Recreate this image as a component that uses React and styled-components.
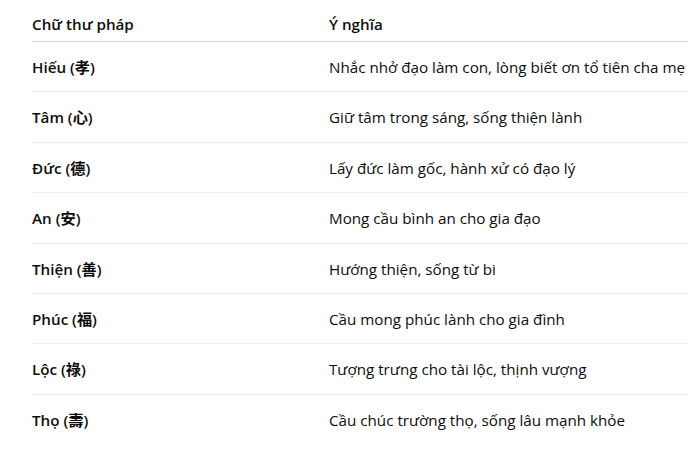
import React from "react";
import styled, { createGlobalStyle } from "styled-components";

const Global = createGlobalStyle`
  html, body { margin: 0; padding: 0; background: #ffffff; overflow: hidden; }
  body { font-family: "Open Sans", "Noto Sans", "Noto Sans CJK SC", sans-serif; color: #0d0d0d; }
`;

const Page = styled.div`
  width: 688px;
  height: 455px;
  overflow: hidden;
  padding: 6px 0 0 32px;
  box-sizing: border-box;
`;

const Table = styled.table`
  border-collapse: collapse;
  width: 720px;
  table-layout: fixed;
  font-size: 15.2px;
  line-height: 19.4px;
`;

const HeadCell = styled.th`
  text-align: left;
  font-weight: 600;
  padding: 9px 0 6.6px;
  border-bottom: 1px solid #d6d6d6;
  width: ${(p) => (p.$first ? "297px" : "auto")};
`;

const Row = styled.tr`
  border-bottom: 1px solid ${(p) => (p.$last ? "transparent" : "#ececec")};
`;

const Cell = styled.td`
  padding: 16px 0 14px;
  font-weight: ${(p) => (p.$bold ? 600 : 400)};
  white-space: nowrap;
`;

const rows = [
  ["Hiếu (孝)", "Nhắc nhở đạo làm con, lòng biết ơn tổ tiên cha mẹ"],
  ["Tâm (心)", "Giữ tâm trong sáng, sống thiện lành"],
  ["Đức (德)", "Lấy đức làm gốc, hành xử có đạo lý"],
  ["An (安)", "Mong cầu bình an cho gia đạo"],
  ["Thiện (善)", "Hướng thiện, sống từ bi"],
  ["Phúc (福)", "Cầu mong phúc lành cho gia đình"],
  ["Lộc (祿)", "Tượng trưng cho tài lộc, thịnh vượng"],
  ["Thọ (壽)", "Cầu chúc trường thọ, sống lâu mạnh khỏe"],
];

export default function App() {
  return (
    <>
      <Global />
      <Page>
        <Table>
          <thead>
            <tr>
              <HeadCell $first>Chữ thư pháp</HeadCell>
              <HeadCell>Ý nghĩa</HeadCell>
            </tr>
          </thead>
          <tbody>
            {rows.map(([a, b], i) => (
              <Row key={a} $last={i === rows.length - 1}>
                <Cell $bold>{a}</Cell>
                <Cell>{b}</Cell>
              </Row>
            ))}
          </tbody>
        </Table>
      </Page>
    </>
  );
}
